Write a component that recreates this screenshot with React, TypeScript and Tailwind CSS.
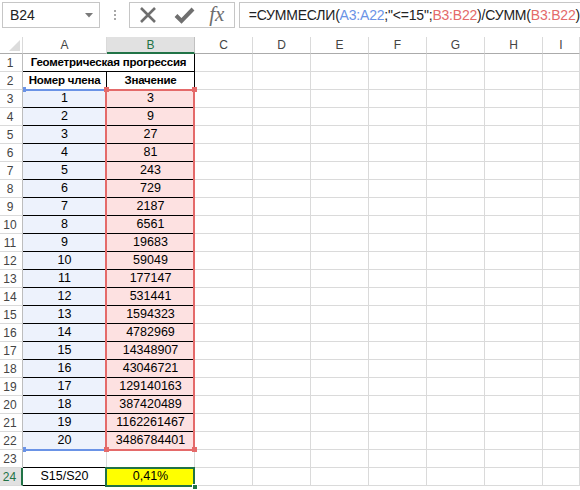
const COLS = ["A", "B", "C", "D", "E", "F", "G", "H", "I"];
const REST = ["w-[58px]", "w-[58px]", "w-[58px]", "w-[58px]", "w-[58px]", "w-[58px]", "flex-1"];

function Empty({ w }: { w: string }) {
  return <div className={`${w} shrink-0 h-full border-r border-b border-[#dadada]`} />;
}

function RowHead({ n, active }: { n: number; active?: boolean }) {
  return (
    <div
      className={
        active
          ? "w-[23px] shrink-0 h-full flex items-center justify-center border-b border-b-[#dadada] border-r-2 border-r-[#217346] bg-[#e1e1e1] text-[#217346] text-[12px] pr-[2px]"
          : "w-[23px] shrink-0 h-full flex items-center justify-center border-b border-r border-b-[#dadada] border-r-[#bdbdbd] text-[#444] text-[12px] pr-[2px]"
      }
    >
      {n}
    </div>
  );
}

function Cell({ className, children }: { className: string; children?: React.ReactNode }) {
  return (
    <div className={`shrink-0 h-full flex items-center justify-center whitespace-nowrap overflow-hidden text-black border-r border-b ${className}`}>
      {children}
    </div>
  );
}

function Row({ n, active, children }: { n: number; active?: boolean; children: React.ReactNode }) {
  return (
    <div className="flex h-[18px]">
      <RowHead n={n} active={active} />
      {children}
      {REST.map((w, i) => (
        <Empty key={i} w={w} />
      ))}
    </div>
  );
}

const DATA = Array.from({ length: 20 }, (_, i) => ({ n: i + 1, v: 3 ** (i + 1) }));

export default function App() {
  return (
    <div className="w-[580px] h-[490px] overflow-hidden bg-white font-['Liberation_Sans',Arial,sans-serif]">
      {/* formula bar */}
      <div className="flex h-[37px] pt-[2px] pl-[2px]">
        <div className="w-[102px] h-[26px] border border-[#c6c6c6] flex items-center pl-[7px] pr-[6px]">
          <span className="text-[14px] text-[#222]">B24</span>
          <svg className="ml-auto" width="8" height="5" viewBox="0 0 8 5">
            <path d="M0 0 H8 L4 4.5 Z" fill="#7a7a7a" />
          </svg>
        </div>
        <div className="w-[30px] h-[26px] flex flex-col items-center justify-center gap-[2px]">
          <div className="w-[2px] h-[2px] bg-[#a8a8a8]" />
          <div className="w-[2px] h-[2px] bg-[#a8a8a8]" />
          <div className="w-[2px] h-[2px] bg-[#a8a8a8]" />
        </div>
        <div className="w-[110px] h-[26px] border border-[#c6c6c6] flex items-center">
          <svg className="ml-[9px]" width="18" height="18" viewBox="0 0 18 18">
            <path d="M2 2 L16 16 M16 2 L2 16" stroke="#6f6f6f" strokeWidth="2.6" />
          </svg>
          <svg className="ml-[17px]" width="21" height="17" viewBox="0 0 21 17">
            <path d="M2 8.5 L7.5 14 L19 2" stroke="#6f6f6f" strokeWidth="4" fill="none" />
          </svg>
          <span className="ml-[14px] font-['Liberation_Serif',serif] italic text-[21px] leading-none text-[#6d6d6d] -mt-[2px]">
            fx
          </span>
        </div>
        <div className="ml-[4px] flex-1 h-[26px] border border-r-0 border-[#c6c6c6] flex items-center pl-[9px] whitespace-nowrap text-[14px] text-[#222] tracking-[-0.2px]">
          =СУММЕСЛИ(<span className="text-[#6a93e6]">A3:A22</span>;"&lt;=15";
          <span className="text-[#e46a6a]">B3:B22</span>)/СУММ(
          <span className="text-[#e46a6a]">B3:B22</span>)
        </div>
      </div>

      {/* sheet */}
      <div className="relative">
        <div className="flex h-[17px] text-[12px] text-[#444]">
          <div className="w-[23px] shrink-0 h-full border-r border-b border-r-[#dadada] border-b-[#ababab] flex items-end justify-end pr-[2px] pb-[2px]">
            <svg width="11" height="11" viewBox="0 0 11 11">
              <path d="M11 0 V11 H0 Z" fill="#dcdcdc" />
            </svg>
          </div>
          {COLS.map((c, i) => (
            <div
              key={c}
              className={
                c === "B"
                  ? "w-[88px] shrink-0 h-full flex items-center justify-center bg-[#e1e1e1] text-[#217346] border-r border-r-[#c0c0c0] border-b-2 border-b-[#217346]"
                  : c === "A"
                  ? "w-[84px] shrink-0 h-full flex items-center justify-center border-r border-b border-r-[#dadada] border-b-[#ababab]"
                  : `${REST[i - 2]} shrink-0 h-full flex items-center justify-center border-r border-b border-r-[#dadada] border-b-[#ababab]`
              }
            >
              {c}
            </div>
          ))}
        </div>

        <Row n={1}>
          <Cell className="w-[172px] border-black font-bold text-[11.5px] tracking-[-0.2px]">Геометрическая прогрессия</Cell>
        </Row>
        <Row n={2}>
          <Cell className="w-[84px] border-black font-bold text-[11.5px] tracking-[-0.2px]">Номер члена</Cell>
          <Cell className="w-[88px] border-black font-bold text-[11.5px] tracking-[-0.2px]">Значение</Cell>
        </Row>
        {DATA.map(({ n, v }) => (
          <Row key={n} n={n + 2}>
            <Cell className="w-[84px] border-black bg-[#edf2fc] text-[12.5px]">{n}</Cell>
            <Cell className="w-[88px] border-black bg-[#fde1e1] text-[12.5px]">{v}</Cell>
          </Row>
        ))}
        <Row n={23}>
          <Cell className="w-[84px] border-r-[#dadada] border-b-black" />
          <Cell className="w-[88px] border-[#dadada]" />
        </Row>
        <Row n={24} active>
          <Cell className="w-[84px] border-black text-[12.5px]">S15/S20</Cell>
          <Cell className="w-[88px] border-black bg-[#ffff00] text-[12.5px]">0,41%</Cell>
        </Row>

        {/* blue range A3:A22 */}
        <div className="absolute left-[23px] top-[52px] w-[83px] h-[362px] border-t-2 border-b-2 border-[#6a93e6]" />
        <div className="absolute left-[23px] top-[50px] w-[3px] h-[5px] bg-[#6a93e6]" />
        <div className="absolute left-[23px] top-[410px] w-[3px] h-[5px] bg-[#6a93e6]" />

        {/* red range B3:B22 */}
        <div className="absolute left-[105px] top-[52px] w-[90px] h-[362px] border-2 border-[#e46a6a]" />
        <div className="absolute left-[104px] top-[50px] w-[5px] h-[5px] bg-[#e46a6a]" />
        <div className="absolute left-[192px] top-[50px] w-[5px] h-[5px] bg-[#e46a6a]" />
        <div className="absolute left-[104px] top-[410px] w-[5px] h-[5px] bg-[#e46a6a]" />
        <div className="absolute left-[192px] top-[410px] w-[5px] h-[5px] bg-[#e46a6a]" />

        {/* selection B24 */}
        <div className="absolute left-[105px] top-[430px] w-[90px] h-[20px] border-2 border-[#217346]" />
        <div className="absolute left-[192px] top-[447px] w-[6px] h-[6px] bg-[#217346] border border-white" />
      </div>
    </div>
  );
}
